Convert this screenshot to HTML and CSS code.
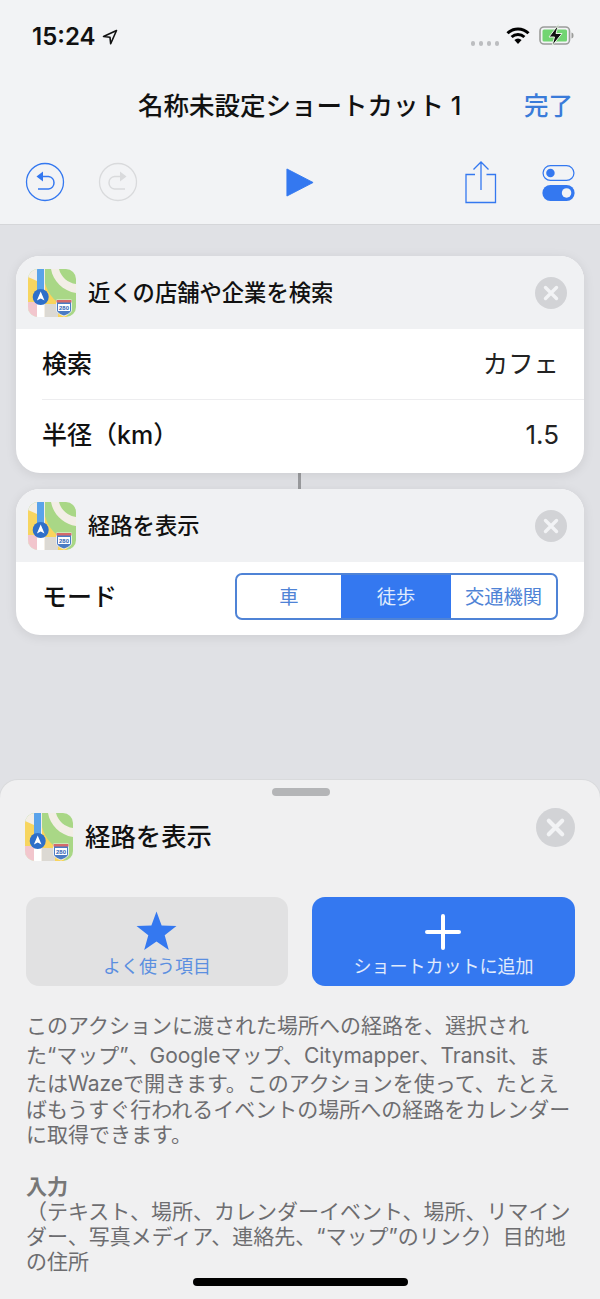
FILE: index.html
```html
<!DOCTYPE html>
<html lang="ja">
<head>
<meta charset="utf-8">
<title>名称未設定ショートカット 1</title>
<link rel="stylesheet" href="styles.css">
</head>
<body>
<svg class="defs" width="0" height="0" aria-hidden="true">
  <symbol id="maps" viewBox="0 0 48 48">
    <rect width="48" height="48" fill="#a9d786"/>
    <path d="M0 0h17v48H0z" fill="#f3eee6"/>
    <path d="M0 8l9 4v22H0z" fill="#f7d55f"/>
    <path d="M0 33h9v15H0z" fill="#f2c6cd"/>
    <path d="M17 14c3 12 12 21 24 26l-2 8H17z" fill="#f9d45c"/>
    <path d="M17 35h13v13H17z" fill="#dcd9d3"/>
    <path d="M23 0h8c2 8 9 14 17 15v9C35 22 25 12 23 0z" fill="#f3eee6"/>
    <path d="M9 26h7v22H9z" fill="#fff"/>
    <path d="M9 0h7v26H9z" fill="#5aa3ea"/>
    <circle cx="12.700" cy="28" r="8" fill="#2e6fc9"/>
    <path d="M12.700 22.500l3.800 9-3.800-2-3.800 2z" fill="#fff"/>
    <path d="M28.500 31h15v10c0 3-5 5-7.500 6-2.500-1-7.500-3-7.500-6z" fill="#4a7cc4" stroke="#fff" stroke-width=".8"/>
    <path d="M28.500 31h15v2.500h-15z" fill="#d46a6a"/>
    <rect x="30" y="35" width="12" height="7" fill="#fff"/>
  </symbol>
  <symbol id="close" viewBox="0 0 32 32">
    <circle cx="16" cy="16" r="16" fill="#d2d3d6"/>
    <path d="M10.500 10.500l11 11M21.500 10.500l-11 11" stroke="#f2f3f5" stroke-width="3.400" stroke-linecap="round"/>
  </symbol>
</svg>

<div class="screen">
  <header class="top">
    <div class="status">
      <div class="clock">
        <span>15:24</span>
        <svg class="loc" viewBox="0 0 16 16"><path d="M14.500 1.500L1.500 7.500l6.500.8.7 6.500z" fill="none" stroke="#111" stroke-width="1.600" stroke-linejoin="round"/></svg>
      </div>
      <div class="indicators">
        <div class="dots"><i></i><i></i><i></i><i></i></div>
        <svg class="wifi" viewBox="0 0 24 17"><path d="M1.500 6.200a15 15 0 0 1 21 0" fill="none" stroke="#000" stroke-width="3"/><path d="M5.600 10a9.300 9.300 0 0 1 12.800 0" fill="none" stroke="#000" stroke-width="3"/><path d="M12 17l-3.600-3.900a5 5 0 0 1 7.200 0z" fill="#000"/></svg>
        <svg class="battery" viewBox="0 0 36 19"><rect x="1" y="1" width="29.500" height="17" rx="4" fill="none" stroke="#9b9c9a" stroke-width="1.600"/><rect x="3.500" y="3.500" width="24.500" height="12" rx="1.500" fill="#72d572"/><path d="M32.500 6.500c1.600.4 2 1.500 2 3s-.4 2.600-2 3z" fill="#9b9c9a"/><path d="M19.500 -1.500L10 11h5.500l-2.500 9L23 7.500h-6z" fill="#111" stroke="#e9f5e6" stroke-width="1"/></svg>
      </div>
    </div>
    <div class="nav">
      <h1 class="title">名称未設定ショートカット 1</h1>
      <span class="done">完了</span>
    </div>
    <div class="tools">
      <div class="history">
        <svg class="round" viewBox="0 0 40 40"><circle cx="20" cy="20" r="18.500" fill="none" stroke="#3478f0" stroke-width="1.300"/><path d="M13 14.500h10.500a6.300 6.300 0 0 1 0 12.500H13" fill="none" stroke="#3478f0" stroke-width="1.500"/><path d="M18 9.500l-6.500 5 6.500 5z" fill="#3478f0"/></svg>
        <svg class="round" viewBox="0 0 40 40"><circle cx="20" cy="20" r="18.500" fill="none" stroke="#d9dadc" stroke-width="1.300"/><path d="M27 14.500H16.500a6.300 6.300 0 0 0 0 12.500H27" fill="none" stroke="#d9dadc" stroke-width="1.500"/><path d="M22 9.500l6.500 5-6.500 5z" fill="#d9dadc"/></svg>
      </div>
      <svg class="play" viewBox="0 0 30 32"><path d="M1 1.500l28 14.500L1 30.500z" fill="#3478f0" stroke="#3478f0" stroke-linejoin="round"/></svg>
      <div class="actions">
        <svg class="share" viewBox="0 0 32 44"><path d="M10 14.500H1v28h29.500v-28H21.500" fill="none" stroke="#3478f0" stroke-width="1.300"/><path d="M16 2v28M8.500 9.500L16 2l7.500 7.500" fill="none" stroke="#3478f0" stroke-width="1.300"/></svg>
        <svg class="toggles" viewBox="0 0 34 38"><rect x=".7" y=".7" width="32.600" height="15.600" rx="7.800" fill="none" stroke="#3478f0" stroke-width="1.300"/><circle cx="8.500" cy="8.500" r="4.500" fill="#3478f0"/><rect y="21" width="34" height="17" rx="8.500" fill="#3478f0"/><circle cx="25.500" cy="29.500" r="5" fill="#f2f3f5"/></svg>
      </div>
    </div>
  </header>

  <main class="canvas">
    <section class="card">
      <div class="card-head">
        <svg class="app" viewBox="0 0 48 48"><use href="#maps"/><text class="shield-num" x="36" y="41">280</text></svg>
        <span class="card-title">近くの店舗や企業を検索</span>
        <svg class="x"><use href="#close"/></svg>
      </div>
      <div class="row row-line">
        <span class="label">検索</span>
        <span class="value">カフェ</span>
      </div>
      <div class="row">
        <span class="label">半径（km）</span>
        <span class="value num">1.5</span>
      </div>
    </section>
    <div class="link"></div>
    <section class="card">
      <div class="card-head">
        <svg class="app" viewBox="0 0 48 48"><use href="#maps"/><text class="shield-num" x="36" y="41">280</text></svg>
        <span class="card-title">経路を表示</span>
        <svg class="x"><use href="#close"/></svg>
      </div>
      <div class="row mode">
        <span class="label">モード</span>
        <div class="segments">
          <span class="seg seg-car">車</span>
          <span class="seg seg-walk">徒歩</span>
          <span class="seg seg-transit">交通機関</span>
        </div>
      </div>
    </section>
  </main>

  <section class="sheet">
    <div class="grip"></div>
    <div class="sheet-head">
      <svg class="app" viewBox="0 0 48 48"><use href="#maps"/><text class="shield-num" x="36" y="41">280</text></svg>
      <h2 class="sheet-title">経路を表示</h2>
      <svg class="sheet-x"><use href="#close"/></svg>
    </div>
    <div class="buttons">
      <div class="btn btn-fav">
        <svg class="star" viewBox="0 0 40 38"><path d="M20 0l5 13.700 14.500.5-11.500 9 4 14.300-12-8.200-12 8.200 4-14.300-11.500-9 14.500-.5z" fill="#3478f0"/></svg>
        <span class="btn-label">よく使う項目</span>
      </div>
      <div class="btn btn-add">
        <svg class="plus" viewBox="0 0 36 36"><path d="M18 2v32M2 18h32" stroke="#fff" stroke-width="4" stroke-linecap="round"/></svg>
        <span class="btn-label">ショートカットに追加</span>
      </div>
    </div>
    <div class="desc">
      <span class="line line-30">このアクションに渡された場所への経路を、選択され</span>
      <span class="line line-30">た“マップ”、Googleマップ、Citymapper、Transit、ま</span>
      <span class="line line-26">たはWazeで開きます。このアクションを使って、たとえ</span>
      <span class="line line-26">ばもうすぐ行われるイベントの場所への経路をカレンダー</span>
      <span class="line line-24">に取得できます。</span>
    </div>
    <h3 class="input-head">入力</h3>
    <p class="input-text">（テキスト、場所、カレンダーイベント、場所、リマイン<br>ダー、写真メディア、連絡先、“マップ”のリンク）目的地<br>の住所</p>
  </section>
  <div class="home"></div>
</div>
</body>
</html>
```

FILE: styles.css
```css
* { box-sizing: border-box; margin: 0; padding: 0; }
html, body { width: 600px; height: 1299px; overflow: hidden; }
body { font-family: "Inter", "Noto Sans CJK JP", sans-serif; color: #000; background: #e0e1e5; }
.defs { position: absolute; }
.shield-num { font-family: "Liberation Sans", sans-serif; font-size: 6px; font-weight: 700; text-anchor: middle; fill: #2f62b3; }
.screen { position: relative; width: 600px; height: 1299px; display: flex; flex-direction: column; overflow: hidden; }

.top { height: 225px; flex: none; background: #f2f3f5; border-bottom: 1px solid #d5d6d9; }
.status { height: 73px; padding: 23px 25px 0 32px; display: flex; justify-content: space-between; align-items: flex-start; }
.clock { display: flex; align-items: center; gap: 7px; font-size: 24px; font-weight: 600; line-height: 28px; color: #111; }
.loc { width: 16px; height: 16px; }
.indicators { display: flex; align-items: center; padding-top: 3px; }
.dots { display: flex; gap: 3.500px; margin: 15px 7px 0 0; }
.dots i { width: 4.500px; height: 4.500px; border-radius: 50%; background: #bcbdc0; }
.wifi { width: 24px; height: 17px; }
.battery { width: 36px; height: 19px; margin-left: 9px; overflow: visible; }

.nav { height: 66px; position: relative; display: flex; align-items: center; justify-content: flex-end; padding: 0 27px 0 0; }
.title { position: absolute; left: 138px; top: 17px; font-size: 25.500px; font-weight: 500; line-height: 32px; white-space: nowrap; color: #111; }
.done { font-size: 24.500px; font-weight: 500; line-height: 32px; color: #3a7bd9; }

.tools { height: 85px; padding: 0 25px; display: flex; justify-content: space-between; align-items: flex-start; position: relative; }
.history { display: flex; gap: 33px; padding-top: 23px; }
.round { width: 40px; height: 40px; }
.play { width: 28px; height: 31px; position: absolute; left: 286px; top: 28px; }
.actions { display: flex; gap: 45px; padding-top: 11px; align-items: flex-start; }
.share { width: 32px; height: 44px; margin-top: 10px; }
.toggles { width: 33px; height: 36px; margin-top: 15px; }

.canvas { height: 555px; flex: none; padding: 31px 16px 0; display: flex; flex-direction: column; }
.card { background: #fff; border-radius: 24px; overflow: hidden; box-shadow: 0 2px 12px rgba(0, 0, 0, .09); position: relative; z-index: 1; }
.card-head { height: 73px; background: #f0f1f3; display: flex; align-items: center; padding: 0 17px 0 12px; }
.app { width: 48px; height: 48px; border-radius: 10px; flex: none; }
.card-title { margin-left: 12px; flex: 1; font-size: 22.300px; font-weight: 500; line-height: 30px; color: #111; }
.x { width: 32px; height: 32px; flex: none; }
.row { height: 73px; margin-left: 26px; padding: 0 25px 3px 0; display: flex; justify-content: space-between; align-items: center; }
.row-line { height: 71px; padding-bottom: 0; border-bottom: 1px solid #ededef; }
.label { font-size: 25px; font-weight: 500; line-height: 32px; color: #111; }
.value { font-size: 25.400px; line-height: 32px; color: #222; }
.num { font-size: 26px; }
.link { width: 3px; height: 16px; background: #9a9b9e; align-self: center; margin-left: -1px; }
.mode { padding: 0 26px 4px 0; }
.segments { width: 323px; height: 47px; display: flex; border: 2px solid #4f83d6; border-radius: 7px; overflow: hidden; }
.seg { display: flex; align-items: center; justify-content: center; font-size: 19.300px; line-height: 26px; color: #4f83d6; }
.seg-car { width: 104px; }
.seg-walk { width: 110px; background: #3478f0; color: #dfeafc; }
.seg-transit { flex: 1; }

.sheet { flex: 1; background: #f0f0f1; border-radius: 18px 18px 0 0; box-shadow: 0 0 0 1px #d9dadc; padding: 8px 25px 0 26px; }
.grip { width: 58px; height: 8px; border-radius: 4px; background: #b4b5b7; margin: 0 auto; }
.sheet-head { height: 70px; margin: 6px 0 0 -1px; display: flex; align-items: center; }
.sheet-title { margin-left: 12px; flex: 1; font-size: 25.400px; font-weight: 500; line-height: 34px; color: #111; }
.sheet-x { width: 39px; height: 39px; flex: none; margin-top: -20px; }
.buttons { display: flex; gap: 24px; margin-top: 25px; }
.btn { width: 262px; height: 89px; border-radius: 13px; display: flex; flex-direction: column; align-items: center; padding-top: 14px; }
.btn-fav { background: #e1e1e2; color: #5b8fe0; }
.btn-add { background: #3478f0; color: #e0ebfc; width: 263px; padding-top: 17px; }
.star { width: 41px; height: 40px; margin-bottom: 1px; position: relative; left: -1px; }
.plus { width: 36px; height: 36px; margin-bottom: 2px; position: relative; left: -1px; }
.btn-label { font-size: 18px; line-height: 24px; margin-top: 3px; white-space: nowrap; }
.desc { margin-top: 25px; font-size: 21px; color: #6d6d70; white-space: nowrap; }
.line { display: block; }
.line-30 { line-height: 30px; }
.line-26 { line-height: 26px; }
.line-24 { line-height: 24px; }
.input-head { margin-top: 28px; font-size: 21px; line-height: 24px; font-weight: 600; color: #777; }
.input-text { font-size: 21px; line-height: 25px; color: #6d6d70; white-space: nowrap; }
.home { position: absolute; left: 193px; bottom: 13px; width: 215px; height: 8px; border-radius: 4px; background: #000; }
```
